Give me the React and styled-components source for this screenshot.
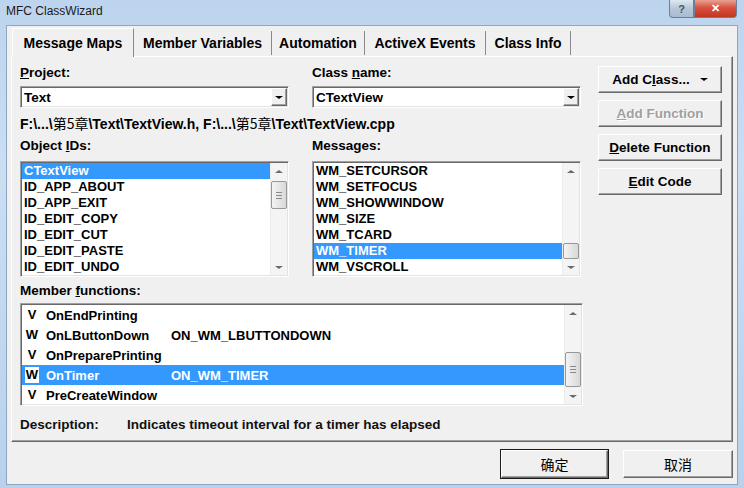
import React from 'react'
import styled, { createGlobalStyle } from 'styled-components'

const GlobalStyle = createGlobalStyle`
  html, body {
    margin: 0;
    padding: 0;
    background: #ffffff;
  }
  body {
    font-family: "Liberation Sans", Arial, "Noto Sans CJK SC", sans-serif;
  }
`

const Window = styled.div`
  width: 744px;
  height: 488px;
  display: flex;
  flex-direction: column;
  overflow: hidden;
  background: linear-gradient(180deg, #bdd4ee 0%, #cbdef2 35%, #b9d1ec 100%);
`

const TitleBar = styled.div`
  height: 26px;
  flex: none;
  display: flex;
  align-items: flex-start;
  padding-left: 6px;
`

const TitleText = styled.div`
  font-family: "Liberation Sans", Arial, sans-serif;
  font-size: 12px;
  line-height: 22px;
  color: #1a1a1a;
`

const Controls = styled.div`
  margin-left: auto;
  margin-right: 7px;
  display: flex;
`

const CaptionButton = styled.div`
  width: ${(p) => p.$w}px;
  height: 18px;
  display: flex;
  align-items: center;
  justify-content: center;
  border: 1px solid #6d7f96;
  border-top: none;
  box-sizing: border-box;
  background: ${(p) =>
    p.$close
      ? 'linear-gradient(180deg, #e9a293 0%, #d9513f 45%, #c2361f 100%)'
      : 'linear-gradient(180deg, #dfe8f3 0%, #b7c6d8 50%, #a9bbd1 100%)'};
  border-radius: ${(p) => (p.$close ? '0 0 4px 0' : '0 0 0 4px')};
  color: ${(p) => (p.$close ? '#ffffff' : '#44546a')};
  font-size: 11px;
  font-weight: 700;
`

const Client = styled.div`
  flex: 1;
  margin: 0 7px 4px;
  padding: 2px 4px 0;
  background: #f0f0f0;
  display: flex;
  flex-direction: column;
  box-shadow: 0 0 0 1px #8fa6c2;
`

const TabStrip = styled.div`
  height: 28px;
  display: flex;
  align-items: flex-end;
  padding-left: 1px;
`

const Tab = styled.div`
  width: ${(p) => p.$w}px;
  height: ${(p) => (p.$active ? 29 : 24)}px;
  margin-bottom: ${(p) => (p.$active ? -1 : 1)}px;
  box-sizing: border-box;
  display: flex;
  align-items: center;
  justify-content: center;
  font-size: 14px;
  font-weight: 700;
  color: #000;
  background: #f0f0f0;
  border-right: 1px solid #8a8a8a;
  border-top: ${(p) => (p.$active ? '1px solid #ffffff' : 'none')};
  border-left: ${(p) => (p.$active ? '1px solid #ffffff' : 'none')};
  position: relative;
  z-index: ${(p) => (p.$active ? 1 : 0)};
`

const TabPanel = styled.div`
  display: flex;
  padding: 9px 0 9px 8px;
  border-top: 1px solid #ffffff;
  border-left: 1px solid #ffffff;
  border-right: 1px solid #696969;
  border-bottom: 1px solid #696969;
  box-shadow: inset -1px -1px #a0a0a0;
`

const Main = styled.div`
  width: 563px;
  display: flex;
  flex-direction: column;
`

const TwoCols = styled.div`
  display: grid;
  grid-template-columns: 269px 269px;
  column-gap: 23px;
  margin-top: ${(p) => p.$mt || 0}px;
`

const Field = styled.div`
  display: flex;
  flex-direction: column;
  gap: ${(p) => p.$gap}px;
`

const Label = styled.div`
  font-size: 13.5px;
  font-weight: 700;
  line-height: 14px;
  height: 14px;
  color: #000;
  white-space: nowrap;
  margin-top: ${(p) => p.$mt || 0}px;
  u {
    text-decoration: underline;
    text-underline-offset: 1px;
  }
`

const Combo = styled.div`
  height: 22px;
  box-sizing: border-box;
  display: flex;
  align-items: center;
  background: #ffffff;
  border: 1px solid;
  border-color: #a0a0a0 #ffffff #ffffff #a0a0a0;
  box-shadow: inset 1px 1px #696969, inset -1px -1px #e3e3e3;
  padding: 1px;
`

const ComboText = styled.div`
  flex: 1;
  padding-left: 2px;
  font-size: 13.5px;
  font-weight: 700;
  color: #000;
`

const DropButton = styled.div`
  width: 16px;
  height: 18px;
  box-sizing: border-box;
  display: flex;
  align-items: center;
  justify-content: center;
  background: #f0f0f0;
  border: 1px solid;
  border-color: #ffffff #696969 #696969 #ffffff;
  box-shadow: inset -1px -1px #a0a0a0;
`

const Triangle = styled.div`
  width: 0;
  height: 0;
  border-left: ${(p) => p.$size}px solid transparent;
  border-right: ${(p) => p.$size}px solid transparent;
  border-top: ${(p) => (p.$up ? 0 : p.$size - 1)}px solid ${(p) => p.$color};
  border-bottom: ${(p) => (p.$up ? p.$size - 1 : 0)}px solid ${(p) => p.$color};
`

const PathText = styled.div`
  margin-top: 8px;
  height: 14px;
  line-height: 14px;
  font-size: 14px;
  font-weight: 700;
  color: #000;
  white-space: nowrap;
  span {
    font-family: "Noto Sans CJK SC", sans-serif;
    font-weight: 400;
  }
`

const ListBox = styled.div`
  width: ${(p) => p.$w}px;
  height: ${(p) => p.$h}px;
  box-sizing: border-box;
  display: flex;
  background: #ffffff;
  border: 1px solid;
  border-color: #a0a0a0 #ffffff #ffffff #a0a0a0;
  box-shadow: inset 1px 1px #696969, inset -1px -1px #e3e3e3;
  padding: 1px;
`

const Rows = styled.div`
  flex: 1;
  overflow: hidden;
  display: flex;
  flex-direction: column;
`

const ListRow = styled.div`
  height: 16px;
  flex: none;
  line-height: 16px;
  padding-left: 2px;
  font-size: 13px;
  font-weight: 700;
  white-space: nowrap;
  color: ${(p) => (p.$selected ? '#ffffff' : '#000000')};
  background: ${(p) => (p.$selected ? '#3399ff' : 'transparent')};
`

const MemberRow = styled.div`
  height: 20px;
  flex: none;
  display: flex;
  align-items: center;
  font-size: 13px;
  font-weight: 700;
  white-space: nowrap;
  color: ${(p) => (p.$selected ? '#ffffff' : '#000000')};
  background: ${(p) => (p.$selected ? '#3399ff' : 'transparent')};
`

const KindCell = styled.div`
  width: 20px;
  display: flex;
  justify-content: center;
  span {
    color: #000;
    padding: 0 1px;
    line-height: 16px;
    background: ${(p) => (p.$selected ? '#ffffff' : 'transparent')};
  }
`

const MemberName = styled.div`
  width: 125px;
  margin-left: 4px;
`

const Scrollbar = styled.div`
  width: 16px;
  flex: none;
  display: flex;
  flex-direction: column;
  background: #f4f4f4;
  border-left: 1px solid #ececec;
`

const ArrowCell = styled.div`
  height: 16px;
  flex: none;
  display: flex;
  align-items: center;
  justify-content: center;
`

const Track = styled.div`
  flex: 1;
  display: flex;
  flex-direction: column;
`

const Thumb = styled.div`
  margin: ${(p) => p.$offset}px 0 0 0;
  height: ${(p) => p.$size}px;
  box-sizing: border-box;
  border: 1px solid #979797;
  border-radius: 2px;
  background: linear-gradient(90deg, #f3f3f3 0%, #e6e6e6 50%, #d8d8d8 100%);
  display: flex;
  align-items: center;
  justify-content: center;
`

const Grip = styled.div`
  width: 6px;
  height: 7px;
  background: repeating-linear-gradient(180deg, #8a8a8a 0 1px, transparent 1px 3px);
`

const ButtonColumn = styled.div`
  margin-left: 15px;
  width: 124px;
  display: flex;
  flex-direction: column;
  gap: 7px;
`

const DialogButton = styled.div`
  width: ${(p) => p.$w || 124}px;
  height: ${(p) => p.$h || 27}px;
  box-sizing: border-box;
  display: flex;
  align-items: center;
  justify-content: center;
  gap: 10px;
  background: #f0f0f0;
  border: 1px solid;
  border-color: #ffffff #696969 #696969 #ffffff;
  box-shadow: inset -1px -1px #a0a0a0;
  outline: ${(p) => (p.$default ? '1px solid #1a1a1a' : 'none')};
  font-size: 13.5px;
  font-weight: 700;
  color: ${(p) => (p.$disabled ? '#a0a0a0' : '#000000')};
  text-shadow: ${(p) => (p.$disabled ? '1px 1px #ffffff' : 'none')};
  u {
    text-decoration: underline;
    text-underline-offset: 1px;
  }
`

const CjkText = styled.span`
  font-family: "Noto Sans CJK SC", sans-serif;
  font-weight: 400;
  font-size: 14px;
`

const Description = styled.div`
  margin-top: 12px;
  height: 14px;
  line-height: 14px;
  display: flex;
  font-size: 13.5px;
  font-weight: 700;
  color: #111;
  white-space: nowrap;
`

const DescLabel = styled.div`
  width: 107px;
`

const Footer = styled.div`
  display: flex;
  justify-content: flex-end;
  gap: 15px;
  margin-top: 8px;
`

const ListScroll = ({ offset, size, grip }) => (
  <Scrollbar>
    <ArrowCell>
      <Triangle $up $size={4} $color="#6a6a6a" />
    </ArrowCell>
    <Track>
      <Thumb $offset={offset} $size={size}>
        {grip && <Grip />}
      </Thumb>
    </Track>
    <ArrowCell>
      <Triangle $size={4} $color="#6a6a6a" />
    </ArrowCell>
  </Scrollbar>
)

const objectIds = [
  'CTextView',
  'ID_APP_ABOUT',
  'ID_APP_EXIT',
  'ID_EDIT_COPY',
  'ID_EDIT_CUT',
  'ID_EDIT_PASTE',
  'ID_EDIT_UNDO'
]

const messages = [
  'WM_SETCURSOR',
  'WM_SETFOCUS',
  'WM_SHOWWINDOW',
  'WM_SIZE',
  'WM_TCARD',
  'WM_TIMER',
  'WM_VSCROLL'
]

const members = [
  { kind: 'V', name: 'OnEndPrinting', handler: '' },
  { kind: 'W', name: 'OnLButtonDown', handler: 'ON_WM_LBUTTONDOWN' },
  { kind: 'V', name: 'OnPreparePrinting', handler: '' },
  { kind: 'W', name: 'OnTimer', handler: 'ON_WM_TIMER', selected: true },
  { kind: 'V', name: 'PreCreateWindow', handler: '' }
]

const tabs = [
  { label: 'Message Maps', w: 122, active: true },
  { label: 'Member Variables', w: 138 },
  { label: 'Automation', w: 93 },
  { label: 'ActiveX Events', w: 121 },
  { label: 'Class Info', w: 85 }
]

const App = () => {
  return (
    <>
      <GlobalStyle />
      <Window>
        <TitleBar>
          <TitleText>MFC ClassWizard</TitleText>
          <Controls>
            <CaptionButton $w={25}>?</CaptionButton>
            <CaptionButton $w={43} $close>
              ✕
            </CaptionButton>
          </Controls>
        </TitleBar>
        <Client>
          <TabStrip>
            {tabs.map((t) => (
              <Tab key={t.label} $w={t.w} $active={t.active}>
                {t.label}
              </Tab>
            ))}
          </TabStrip>
          <TabPanel>
            <Main>
              <TwoCols>
                <Field $gap={6}>
                  <Label>
                    <u>P</u>roject:
                  </Label>
                  <Combo>
                    <ComboText>Text</ComboText>
                    <DropButton>
                      <Triangle $size={4} $color="#000" />
                    </DropButton>
                  </Combo>
                </Field>
                <Field $gap={6}>
                  <Label>
                    Class <u>n</u>ame:
                  </Label>
                  <Combo>
                    <ComboText>CTextView</ComboText>
                    <DropButton>
                      <Triangle $size={4} $color="#000" />
                    </DropButton>
                  </Combo>
                </Field>
              </TwoCols>
              <PathText>
                F:\...\<span>第5章</span>\Text\TextView.h, F:\...\<span>第5章</span>\Text\TextView.cpp
              </PathText>
              <TwoCols $mt={9}>
                <Field $gap={8}>
                  <Label>
                    Object <u>I</u>Ds:
                  </Label>
                  <ListBox $w={269} $h={116}>
                    <Rows>
                      {objectIds.map((id, i) => (
                        <ListRow key={id} $selected={i === 0}>
                          {id}
                        </ListRow>
                      ))}
                    </Rows>
                    <ListScroll offset={2} size={28} grip />
                  </ListBox>
                </Field>
                <Field $gap={8}>
                  <Label>Messages:</Label>
                  <ListBox $w={269} $h={116}>
                    <Rows>
                      {messages.map((m) => (
                        <ListRow key={m} $selected={m === 'WM_TIMER'}>
                          {m}
                        </ListRow>
                      ))}
                    </Rows>
                    <ListScroll offset={64} size={16} />
                  </ListBox>
                </Field>
              </TwoCols>
              <Field $gap={5}>
                <Label $mt={7}>
                  Member <u>f</u>unctions:
                </Label>
                <ListBox $w={563} $h={103}>
                  <Rows>
                    {members.map((m) => (
                      <MemberRow key={m.name} $selected={m.selected}>
                        <KindCell $selected={m.selected}>
                          <span>{m.kind}</span>
                        </KindCell>
                        <MemberName>{m.name}</MemberName>
                        <div>{m.handler}</div>
                      </MemberRow>
                    ))}
                  </Rows>
                  <ListScroll offset={31} size={35} grip />
                </ListBox>
              </Field>
              <Description>
                <DescLabel>Description:</DescLabel>
                <div>Indicates timeout interval for a timer has elapsed</div>
              </Description>
            </Main>
            <ButtonColumn>
              <DialogButton>
                <span>
                  Add C<u>l</u>ass...
                </span>
                <Triangle $size={4} $color="#000" />
              </DialogButton>
              <DialogButton $disabled>
                <span>
                  <u>A</u>dd Function
                </span>
              </DialogButton>
              <DialogButton>
                <span>
                  <u>D</u>elete Function
                </span>
              </DialogButton>
              <DialogButton>
                <span>
                  <u>E</u>dit Code
                </span>
              </DialogButton>
            </ButtonColumn>
          </TabPanel>
          <Footer>
            <DialogButton $w={107} $h={28} $default>
              <CjkText>确定</CjkText>
            </DialogButton>
            <DialogButton $w={110} $h={28}>
              <CjkText>取消</CjkText>
            </DialogButton>
          </Footer>
        </Client>
      </Window>
    </>
  )
}

export default App
